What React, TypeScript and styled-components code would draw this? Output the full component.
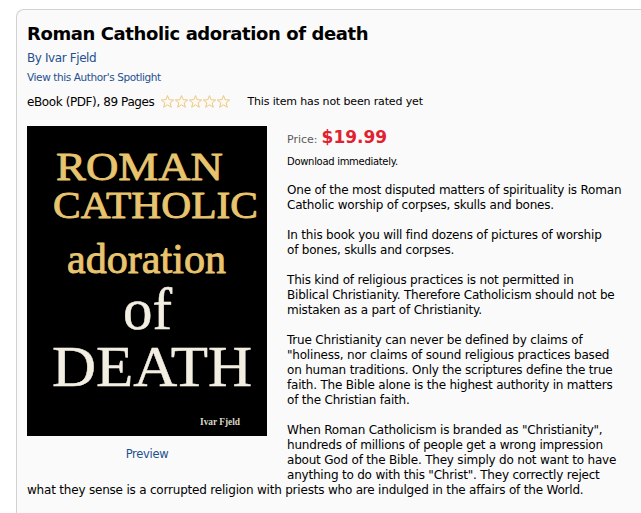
import React from "react";
import styled, { createGlobalStyle } from "styled-components";

const GlobalStyle = createGlobalStyle`
  html, body { margin: 0; padding: 0; background: #ffffff; overflow: hidden; }
  body { font-family: "DejaVu Sans", Verdana, sans-serif; color: #000; }
`;

const Page = styled.div`
  padding: 9px 0 0 16px;
`;

const Panel = styled.section`
  border-top: 1px solid #d2d2d2;
  border-left: 1px solid #d2d2d2;
  border-top-left-radius: 8px;
  background: #fafafa;
  padding: 13px 9px 20px 10px;
  min-height: 480px;
`;

const Title = styled.h1`
  margin: 0;
  font-size: 18px;
  line-height: 22px;
  font-weight: bold;
  letter-spacing: -0.4px;
  color: #000;
`;

const Link = styled.a<{ $size: number; $spacing: number; $top: number }>`
  display: block;
  color: #24508f;
  text-decoration: none;
  font-size: ${(p) => p.$size}px;
  letter-spacing: ${(p) => p.$spacing}px;
  line-height: ${(p) => Math.round(p.$size * 1.33)}px;
  margin-top: ${(p) => p.$top}px;
`;

const MetaRow = styled.div`
  display: flex;
  align-items: center;
  height: 16px;
  margin-top: 10px;
`;

const Format = styled.span`
  font-size: 12px;
  letter-spacing: -0.4px;
  line-height: 16px;
`;

const Stars = styled.svg`
  margin-left: 6px;
  display: block;
`;

const Rating = styled.span`
  margin-left: 16px;
  font-size: 11px;
  letter-spacing: -0.15px;
  line-height: 16px;
`;

const Body = styled.div`
  margin-top: 16px;
  overflow: hidden;
`;

const CoverFigure = styled.figure`
  float: left;
  width: 240px;
  margin: 0 20px 10px 0;
  text-align: center;
`;

const Cover = styled.svg`
  display: block;
  background: #000;
`;

const PreviewLink = styled.a`
  display: inline-block;
  margin-top: 11px;
  color: #24508f;
  text-decoration: none;
  font-size: 11.5px;
  letter-spacing: -0.3px;
  line-height: 14px;
`;

const PriceRow = styled.div`
  display: flex;
  align-items: baseline;
  gap: 4px;
  line-height: 20px;
  padding-top: 1px;
`;

const PriceLabel = styled.span`
  font-size: 11px;
  color: #5a5a5a;
`;

const PriceValue = styled.span`
  font-size: 17px;
  font-weight: bold;
  color: #e2212f;
`;

const Download = styled.div`
  margin-top: 5px;
  font-size: 10px;
  letter-spacing: -0.3px;
  line-height: 13px;
`;

const Paragraph = styled.p<{ $first?: boolean }>`
  margin: ${(p) => (p.$first ? "15.5px" : "15px")} 0 0 0;
  font-size: 12px;
  letter-spacing: -0.2px;
  line-height: 15px;
`;

const starPoints =
  "7,0.6 8.65,4.73 13.18,4.99 9.66,7.87 10.82,12.26 7,9.8 3.18,12.26 4.34,7.87 0.82,4.99 5.35,4.73";

const StarRating = () => (
  <Stars width="71" height="14" viewBox="0 0 71 14" aria-label="not rated">
    {[0, 1, 2, 3, 4].map((i) => (
      <polygon
        key={i}
        points={starPoints}
        transform={`translate(${i * 14 + 0.5},0)`}
        fill="#fffaf0"
        stroke="#e9c27a"
        strokeWidth="0.9"
        strokeLinejoin="round"
      />
    ))}
  </Stars>
);

const gold = "#e8c46f";
const cream = "#f3eee2";

const BookCover = () => (
  <Cover width="240" height="310" viewBox="0 0 240 310">
    <g fontFamily='"Liberation Serif", "Times New Roman", serif' strokeLinejoin="round">
      <text x="29" y="54" fontSize="41" fill={gold} stroke={gold} strokeWidth="0.9" textLength="167" lengthAdjust="spacingAndGlyphs">
        ROMAN
      </text>
      <text x="26" y="92" fontSize="38" fill={gold} stroke={gold} strokeWidth="0.9" textLength="205" lengthAdjust="spacingAndGlyphs">
        CATHOLIC
      </text>
      <text x="40" y="147" fontSize="42" fill={gold} stroke={gold} strokeWidth="0.9" textLength="159" lengthAdjust="spacingAndGlyphs">
        adoration
      </text>
      <text x="96" y="203" fontSize="59" fill={cream} stroke={cream} strokeWidth="0.5" textLength="49" lengthAdjust="spacingAndGlyphs">
        of
      </text>
      <text x="25" y="260" fontSize="58" fill={cream} stroke={cream} strokeWidth="0.5" textLength="200" lengthAdjust="spacingAndGlyphs">
        DEATH
      </text>
      <text x="173" y="299" fontSize="10" fontWeight="bold" fill="#ddd8ca" textLength="40" lengthAdjust="spacingAndGlyphs">
        Ivar Fjeld
      </text>
    </g>
  </Cover>
);

export default function App() {
  return (
    <>
      <GlobalStyle />
      <Page>
        <Panel>
          <Title>Roman Catholic adoration of death</Title>
          <Link href="#" $size={12} $spacing={-0.4} $top={5}>
            By Ivar Fjeld
          </Link>
          <Link href="#" $size={10.5} $spacing={-0.4} $top={3.5}>
            View this Author's Spotlight
          </Link>
          <MetaRow>
            <Format>eBook (PDF), 89 Pages</Format>
            <StarRating />
            <Rating>This item has not been rated yet</Rating>
          </MetaRow>
          <Body>
            <CoverFigure>
              <BookCover />
              <PreviewLink href="#">Preview</PreviewLink>
            </CoverFigure>
            <PriceRow>
              <PriceLabel>Price:</PriceLabel>
              <PriceValue>$19.99</PriceValue>
            </PriceRow>
            <Download>Download immediately.</Download>
            <Paragraph $first>
              One of the most disputed matters of spirituality is Roman
              <br />
              Catholic worship of corpses, skulls and bones.
            </Paragraph>
            <Paragraph>
              In this book you will find dozens of pictures of worship
              <br />
              of bones, skulls and corpses.
            </Paragraph>
            <Paragraph>
              This kind of religious practices is not permitted in
              <br />
              Biblical Christianity. Therefore Catholicism should not be
              <br />
              mistaken as a part of Christianity.
            </Paragraph>
            <Paragraph>
              True Christianity can never be defined by claims of
              <br />
              "holiness, nor claims of sound religious practices based
              <br />
              on human traditions. Only the scriptures define the true
              <br />
              faith. The Bible alone is the highest authority in matters
              <br />
              of the Christian faith.
            </Paragraph>
            <Paragraph>
              When Roman Catholicism is branded as "Christianity",
              <br />
              hundreds of millions of people get a wrong impression
              <br />
              about God of the Bible. They simply do not want to have
              <br />
              anything to do with this "Christ". They correctly reject
              <br />
              what they sense is a corrupted religion with priests who are indulged in the affairs of the World.
            </Paragraph>
          </Body>
        </Panel>
      </Page>
    </>
  );
}
